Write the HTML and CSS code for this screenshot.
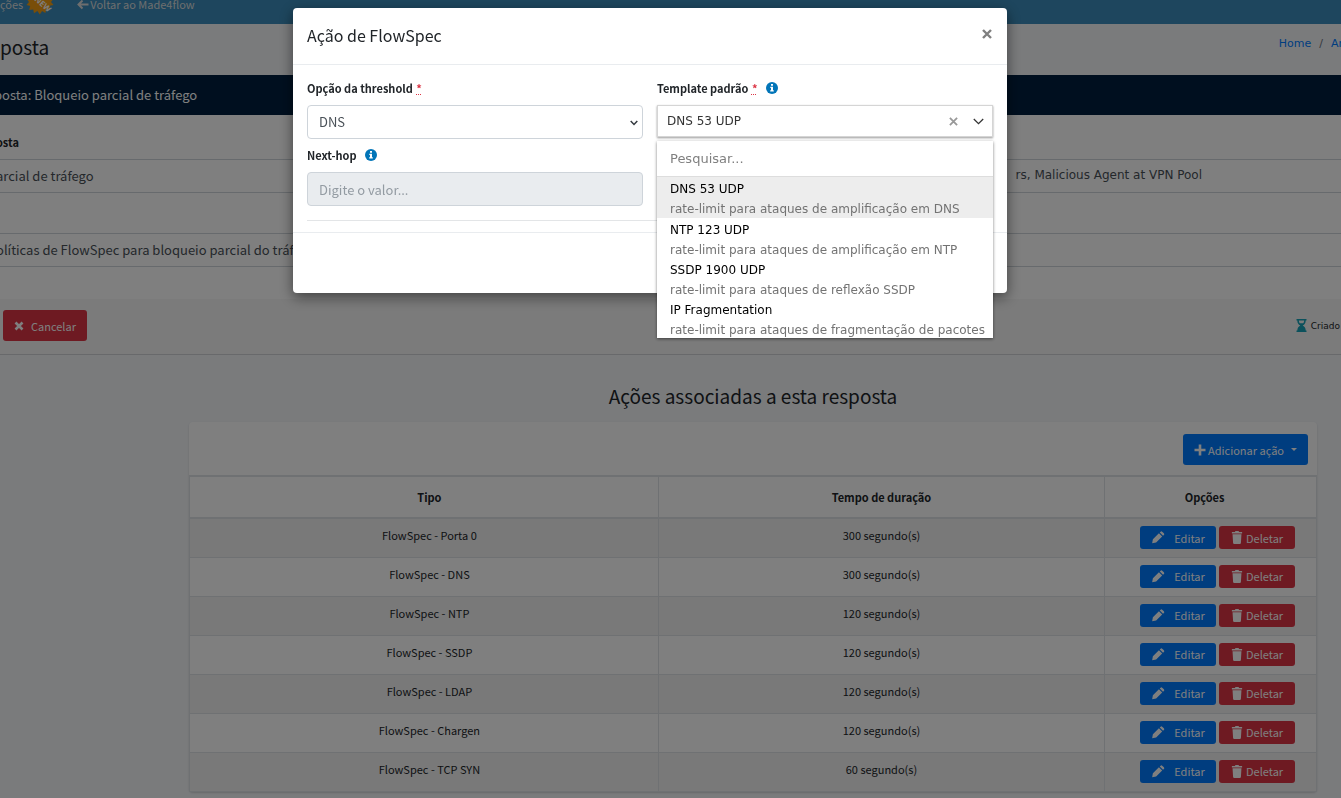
FILE: index.html
```html
<!DOCTYPE html>
<html lang="pt-BR">
<head>
<meta charset="utf-8">
<title>Ação de FlowSpec</title>
<link rel="stylesheet" href="styles.css">
</head>
<body>
<svg class="defs" aria-hidden="true">
  <symbol id="pencil" viewBox="0 0 14 14"><path d="M.7 13.300l.8-4.300L8 2.500l3.500 3.500L5 12.500zM8.900 1.600l.9-.9q.9-.8 1.700 0l1.800 1.800q.8.900 0 1.700l-.9.9z"/></symbol>
  <symbol id="trash" viewBox="0 0 12 14"><path d="M.5 1h3.200l.7-1h3.200l.7 1h3.200v1.600H.5zM1.200 3.500h9.600l-.6 9.300q-.1 1.200-1.200 1.200H3q-1.100 0-1.200-1.200z"/></symbol>
  <symbol id="info" viewBox="0 0 12 12"><circle cx="6" cy="6" r="6" fill="#0275b8"/><path fill="#fff" d="M5 2h2v1.700H5zM4.300 4.800H7v3.400h.8v1.300H4.200V8.200H5V6h-.7z"/></symbol>
</svg>

<header class="navbar">
  <span>ções</span>
  <svg class="burst" viewBox="0 0 28 15" aria-hidden="true"><path fill="#f39c12" d="M0-2H28L25 2l2.500 3-3.800.8.600 3.900-4-.6-.9 3.900-3.300-2-2.300 3.600-2.400-3.500-3.400 2.200-.8-3.900-4 .5 1-4L.5 5 3 2z"/><text x="8" y="0" transform="rotate(42 8 0)" class="burst-text">NEW</text></svg>
  <a class="back" href="#"><svg viewBox="0 0 12 10" aria-hidden="true"><path d="M5.500 .5L1.500 4.500l4 4M2 4.500h9.500" fill="none" stroke="currentColor" stroke-width="2"/></svg>Voltar ao Made4flow</a>
</header>

<div class="page-head">
  <h1>posta</h1>
  <nav class="crumbs"><a href="#">Home</a><span>/</span><a href="#">Ar</a></nav>
</div>

<section class="response">
  <h2 class="response-title">posta: Bloqueio parcial de tráfego</h2>
  <div class="fields">
    <div class="field-head">osta</div>
    <div class="field-row"><span>arcial de tráfego</span><span class="agents">rs, Malicious Agent at VPN Pool</span></div>
    <div class="field-row"><span>olíticas de FlowSpec para bloqueio parcial do tráfego</span></div>
  </div>
  <div class="response-foot">
    <button class="btn red cancel" type="button"><svg viewBox="0 0 10 10" aria-hidden="true"><path d="M1.500 1.500l7 7m0-7l-7 7" stroke="currentColor" stroke-width="2.600"/></svg>Cancelar</button>
    <span class="created"><svg viewBox="0 0 10 13" aria-hidden="true"><path d="M0 0h10v1.500H9.200Q9.200 5 6.200 6.500 9.200 8 9.200 11.500H10V13H0v-1.500h.8Q.8 8 3.800 6.500.8 5 .8 1.500H0zm2.300 1.500q.2 2 1 2.800h3.400q.8-.8 1-2.800z" fill-rule="evenodd"/></svg>Criado</span>
  </div>
</section>

<main class="actions">
  <h2>Ações associadas a esta resposta</h2>
  <div class="card">
    <div class="card-head"><button class="btn blue add" type="button"><svg viewBox="0 0 12 12" aria-hidden="true"><path d="M6 .5v11M.5 6h11" stroke="currentColor" stroke-width="2.600"/></svg>Adicionar ação<i class="caret"></i></button></div>
    <table>
      <thead><tr><th class="kind">Tipo</th><th class="time">Tempo de duração</th><th class="opts">Opções</th></tr></thead>
      <tbody>
        <tr><td class="kind">FlowSpec - Porta 0</td><td>300 segundo(s)</td><td class="tools"><button class="btn blue small edit" type="button"><svg><use href="#pencil"/></svg>Editar</button><button class="btn red small" type="button"><svg><use href="#trash"/></svg>Deletar</button></td></tr>
        <tr><td class="kind">FlowSpec - DNS</td><td>300 segundo(s)</td><td class="tools"><button class="btn blue small edit" type="button"><svg><use href="#pencil"/></svg>Editar</button><button class="btn red small" type="button"><svg><use href="#trash"/></svg>Deletar</button></td></tr>
        <tr><td class="kind">FlowSpec - NTP</td><td>120 segundo(s)</td><td class="tools"><button class="btn blue small edit" type="button"><svg><use href="#pencil"/></svg>Editar</button><button class="btn red small" type="button"><svg><use href="#trash"/></svg>Deletar</button></td></tr>
        <tr><td class="kind">FlowSpec - SSDP</td><td>120 segundo(s)</td><td class="tools"><button class="btn blue small edit" type="button"><svg><use href="#pencil"/></svg>Editar</button><button class="btn red small" type="button"><svg><use href="#trash"/></svg>Deletar</button></td></tr>
        <tr><td class="kind">FlowSpec - LDAP</td><td>120 segundo(s)</td><td class="tools"><button class="btn blue small edit" type="button"><svg><use href="#pencil"/></svg>Editar</button><button class="btn red small" type="button"><svg><use href="#trash"/></svg>Deletar</button></td></tr>
        <tr><td class="kind">FlowSpec - Chargen</td><td>120 segundo(s)</td><td class="tools"><button class="btn blue small edit" type="button"><svg><use href="#pencil"/></svg>Editar</button><button class="btn red small" type="button"><svg><use href="#trash"/></svg>Deletar</button></td></tr>
        <tr><td class="kind">FlowSpec - TCP SYN</td><td>60 segundo(s)</td><td class="tools"><button class="btn blue small edit" type="button"><svg><use href="#pencil"/></svg>Editar</button><button class="btn red small" type="button"><svg><use href="#trash"/></svg>Deletar</button></td></tr>
      </tbody>
    </table>
  </div>
</main>

<div class="backdrop">
  <div class="modal" role="dialog" aria-labelledby="modal-title">
    <div class="modal-head">
      <h3 id="modal-title">Ação de FlowSpec</h3>
      <button class="close" type="button" aria-label="Fechar"><svg viewBox="0 0 10 10"><path d="M1 1l8 8m0-8L1 9" stroke="currentColor" stroke-width="2.400"/></svg></button>
    </div>
    <form class="modal-body">
      <div class="group">
        <label for="threshold">Opção da threshold <abbr title="obrigatório">*</abbr></label>
        <div class="select-wrap">
          <select id="threshold" class="control"><option>DNS</option></select>
          <svg viewBox="0 0 8 6" aria-hidden="true"><path d="M.7 1L4 4.500 7.300 1" fill="none" stroke="currentColor" stroke-width="1.500"/></svg>
        </div>
      </div>
      <div class="group">
        <label for="template">Template padrão <abbr title="obrigatório">*</abbr><svg class="info"><use href="#info"/></svg></label>
        <div class="combo">
          <button id="template" class="combo-value" type="button">DNS 53 UDP</button>
          <button class="combo-clear" type="button" aria-label="Limpar"><svg viewBox="0 0 10 10"><path d="M1 1l8 8m0-8L1 9" stroke="currentColor" stroke-width="2"/></svg></button>
          <svg class="combo-arrow" viewBox="0 0 11 7" aria-hidden="true"><path d="M.8 1l4.700 4.600L10.200 1" fill="none" stroke="currentColor" stroke-width="1.300"/></svg>
          <div class="menu">
            <input class="search" type="text" placeholder="Pesquisar..." aria-label="Pesquisar">
            <ul>
              <li class="active">DNS 53 UDP<small>rate-limit para ataques de amplificação em DNS</small></li>
              <li>NTP 123 UDP<small>rate-limit para ataques de amplificação em NTP</small></li>
              <li>SSDP 1900 UDP<small>rate-limit para ataques de reflexão SSDP</small></li>
              <li>IP Fragmentation<small>rate-limit para ataques de fragmentação de pacotes</small></li>
            </ul>
          </div>
        </div>
      </div>
      <div class="group">
        <label for="nexthop">Next-hop<svg class="info"><use href="#info"/></svg></label>
        <input id="nexthop" class="control" type="text" placeholder="Digite o valor..." disabled>
      </div>
      <hr>
    </form>
    <div class="modal-foot"></div>
  </div>
</div>
</body>
</html>
```
FILE: styles.css
```css
* { box-sizing: border-box; }
body {
  margin: 0;
  height: 100vh;
  overflow: hidden;
  background: #f4f6f9;
  color: #212529;
  font: 11px/18px "Noto Sans CJK SC", "Noto Sans", sans-serif;
}
h1, h2, h3 { margin: 0; font-weight: 400; }
a { color: #007bff; text-decoration: none; }
button, input, select { font: inherit; color: inherit; }
svg { fill: currentColor; flex: none; }
.defs { display: none; }

/* Page behind the dialog */
.navbar {
  display: flex;
  align-items: flex-start;
  height: 24px;
  overflow: hidden;
  background: #3c8dbc;
  color: #ddd;
  line-height: 8px;
}
.burst { width: 28px; height: 15px; margin: 0 23px 0 3px; }
.burst-text { fill: #fff; font: bold 8px "Noto Sans", sans-serif; }
.back { display: flex; color: #ddd; }
.back svg { width: 12px; height: 10px; margin-right: 1px; }

.page-head {
  display: flex;
  justify-content: space-between;
  height: 51px;
  padding-top: 10px;
}
.page-head h1 { font-size: 19px; line-height: 26px; }
.crumbs {
  display: flex;
  gap: 8px;
  font: 11px/20px "DejaVu Sans", sans-serif;
  color: #6c757d;
  margin-right: -2px;
}

.response { background: #fff; border-bottom: 1px solid #d0d3d6; }
.response-title {
  background: #001f3f;
  color: #fff;
  font-size: 13px;
  line-height: 40px;
  text-indent: -6px;
}
.fields { text-indent: -4px; }
.field-head { padding-top: 18px; height: 44px; font-weight: 700; }
.field-row {
  display: flex;
  justify-content: space-between;
  height: 34px;
  margin-bottom: 40px;
  border: solid #ced4da;
  border-width: 1px 0;
  color: #495057;
  font-size: 13px;
  line-height: 32px;
}
.field-row:last-child { margin-bottom: 32px; }
.agents {
  margin-right: 139px;
  font: 12px/30px "DejaVu Sans", sans-serif;
}
.response-foot {
  display: flex;
  align-items: center;
  justify-content: space-between;
  height: 55px;
  padding: 0 3px 2px;
  background: #f7f7f7;
}
.created {
  display: flex;
  gap: 4px;
  align-items: center;
  margin-right: -2px;
  font: 9px/12px "DejaVu Sans", sans-serif;
}
.created svg { width: 11px; height: 13px; color: #17a2b8; }

.btn {
  display: inline-flex;
  align-items: center;
  justify-content: center;
  height: 31px;
  padding: 0 11px;
  border: 0;
  border-radius: 3px;
  color: #fff;
}
.blue { background: #007bff; }
.red { background: #dc3545; }
.cancel svg { width: 10px; height: 10px; margin-right: 7px; }
.add svg { width: 12px; height: 12px; margin-right: 2px; }
.caret {
  margin-left: 7px;
  border: 3px solid transparent;
  border-top-color: currentColor;
  border-bottom: 0;
}

.actions { margin: 27px 24px 0 189px; }
.actions h2 {
  margin-bottom: 13px;
  font-size: 19px;
  line-height: 27px;
  text-align: center;
}
.card {
  background: #fff;
  border-radius: 4px;
  box-shadow: 0 1px 2px rgba(0, 0, 0, .15);
}
.card-head {
  display: flex;
  justify-content: flex-end;
  height: 53px;
  padding: 12px 9px 0;
}
table {
  width: 100%;
  table-layout: fixed;
  border-collapse: collapse;
  text-align: center;
}
th, td { padding: 0; border: 1px solid #dee2e6; vertical-align: top; }
th { height: 42px; padding-top: 11px; border-width: 2px 1px; }
td { height: 39px; padding-top: 7px; }
.kind { width: 41.600%; padding-left: 11px; }
.time { width: 39.600%; }
.opts { padding-right: 12px; }
.tools { padding-left: 14px; }
tbody tr:nth-child(odd) { background: #f2f2f2; }
.small { width: 76px; height: 23px; padding: 0; }
.small + .small { margin-left: 3px; }
.small svg { width: 12px; height: 13px; margin-right: 3px; }
.small.edit svg { width: 14px; margin-right: 9px; }

/* Dialog */
.backdrop {
  position: fixed;
  inset: 0;
  display: flex;
  align-items: flex-start;
  justify-content: center;
  padding: 8px 41px 0 0;
  background: rgba(0, 0, 0, .5);
}
.modal {
  width: 100%;
  max-width: 714px;
  background: #fff;
  border-radius: 4px;
  box-shadow: 0 4px 14px rgba(0, 0, 0, .5);
}
.modal-head {
  display: flex;
  justify-content: space-between;
  padding: 14px 14px 15px;
  border-bottom: 1px solid #e9ecef;
}
.modal-head h3 { font-size: 16px; line-height: 27px; }
.close {
  height: 24px;
  padding: 0 1px;
  border: 0;
  background: none;
  color: #7f7f7f;
}
.close svg { display: block; width: 10px; height: 10px; }
.modal-body {
  display: grid;
  grid-template-columns: 1fr 1fr;
  gap: 7px 14px;
  padding: 14px 14px 11px;
}
label { display: flex; align-items: center; height: 18px; margin-bottom: 8px; font-weight: 700; white-space: pre; }
abbr { margin-left: 1px; color: #dc3545; }
.info { width: 12px; height: 12px; margin-left: 8px; }
.control {
  display: block;
  width: 100%;
  height: 34px;
  padding: 0 11px;
  border: 1px solid #ced4da;
  border-radius: 4px;
  background: #fff;
  color: #495057;
  font-size: 13px;
  appearance: none;
}
.control:disabled { background: #e9ecef; }
.control::placeholder { color: #939ba2; opacity: 1; }
.select-wrap { position: relative; }
.select-wrap svg { position: absolute; right: 5px; top: 15px; width: 8px; height: 6px; color: #343a40; }
.combo {
  position: relative;
  display: flex;
  align-items: center;
  height: 32px;
  padding: 0 8px 0 9px;
  border: 1px solid #d5d5d5;
  box-shadow: 0 1px 2px rgba(0, 0, 0, .4);
  font: 12px/16px "DejaVu Sans", sans-serif;
}
.combo button { padding: 0; border: 0; background: none; text-align: left; }
.combo .combo-value { flex: 1; color: #333; }
.combo .combo-clear { color: #999; }
.combo-clear svg { display: block; width: 9px; height: 9px; }
.combo-arrow { width: 11px; height: 7px; margin-left: 15px; color: #333; }
.menu {
  position: absolute;
  top: 35px;
  left: -1px;
  right: -1px;
  background: #fff;
  box-shadow: 0 1px 3px rgba(0, 0, 0, .5);
}
.search {
  display: block;
  width: 100%;
  height: 36px;
  padding: 0 13px;
  border: 0;
  border-bottom: 1px solid #ddd;
  font-size: 13px;
}
.search::placeholder { color: #808080; }
.menu ul { margin: 0; padding: 0; list-style: none; }
.menu li { height: 40px; padding: 2px 13px 0; color: #000; line-height: 20px; white-space: nowrap; }
.menu .active { height: 41px; background: #ededed; }
.menu small { display: block; color: #737373; font-size: 12px; }
hr {
  grid-column: 1 / -1;
  width: 100%;
  margin: 7px 0 0;
  border: 0;
  border-top: 1px solid #e3e5e7;
}
.modal-foot { height: 61px; border-top: 1px solid #e9ecef; }
```
